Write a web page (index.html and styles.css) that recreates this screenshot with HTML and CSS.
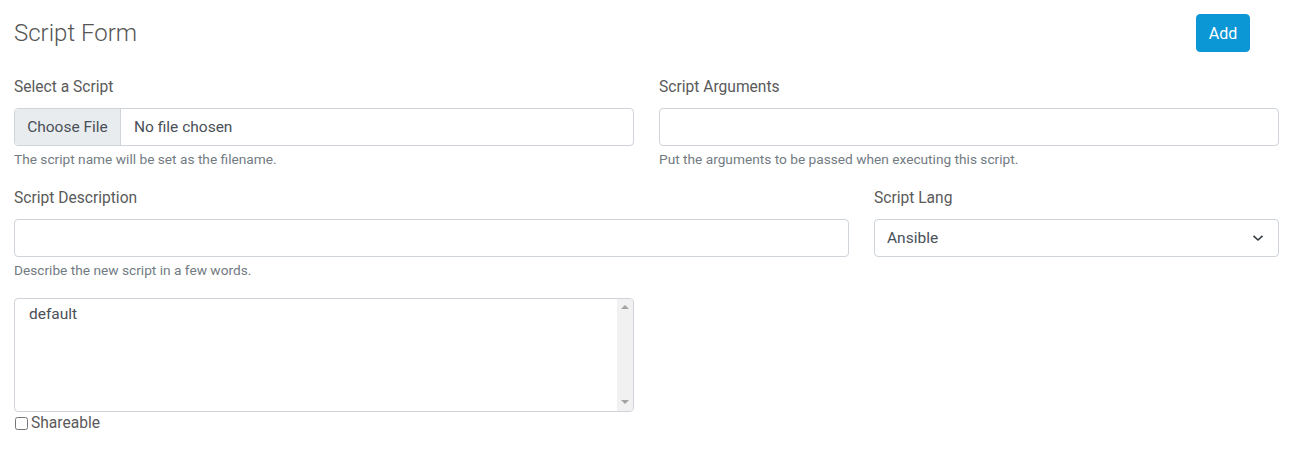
FILE: index.html
```html
<!DOCTYPE html>
<html>
<head>
<meta charset="utf-8">
<link rel="stylesheet" href="styles.css">
</head>
<body>
<div class="page">
  <header class="head">
    <h1 class="title">Script Form</h1>
    <button class="btn-add" type="button">Add</button>
  </header>

  <div class="row">
    <div class="group col-6">
      <label class="lbl">Select a Script</label>
      <div class="file">
        <span class="file-btn">Choose File</span>
        <span class="file-name">No file chosen</span>
      </div>
      <small class="help">The script name will be set as the filename.</small>
    </div>
    <div class="group col-6">
      <label class="lbl">Script Arguments</label>
      <input class="ctl" type="text">
      <small class="help">Put the arguments to be passed when executing this script.</small>
    </div>
  </div>

  <div class="row">
    <div class="group col-8">
      <label class="lbl">Script Description</label>
      <input class="ctl" type="text">
      <small class="help">Describe the new script in a few words.</small>
    </div>
    <div class="group col-4">
      <label class="lbl">Script Lang</label>
      <div class="sel-wrap">
        <select class="ctl sel"><option>Ansible</option></select>
        <svg class="chev" width="12" height="8" viewBox="0 0 12 8"><path d="M1.5 1.8 L6 6 L10.5 1.8" fill="none" stroke="#343a40" stroke-width="1.6"/></svg>
      </div>
    </div>
  </div>

  <div class="row">
    <div class="col-6">
      <div class="ta-wrap">
        <textarea class="code">default</textarea>
        <div class="vscroll"><span class="arr up"></span><span class="arr down"></span></div>
      </div>
      <label class="check"><input type="checkbox" class="cb">Shareable</label>
    </div>
  </div>
</div>
</body>
</html>
```

FILE: styles.css
```css
* { box-sizing: border-box; }
html, body { margin: 0; padding: 0; background: #fff; }
body { font-family: Roboto, "Noto Sans", sans-serif; color: #555; }
.page { padding: 14px 16px 0 14px; }
.head { display: flex; align-items: center; justify-content: space-between; height: 38px; margin-bottom: 23px; padding-right: 29px; }
.title { margin: 0; font-size: 24px; font-weight: 300; color: #555; line-height: 38px; }
.btn-add { background: #0b96d6; color: #fff; border: 1px solid #0b96d6; border-radius: 4px; font-family: Roboto, sans-serif; font-size: 16px; height: 38px; width: 54px; padding: 0; }
.row { display: grid; grid-template-columns: repeat(12, 1fr); column-gap: 25px; }
.col-6 { grid-column: span 6; }
.col-8 { grid-column: span 8; }
.col-4 { grid-column: span 4; }
.group { display: flex; flex-direction: column; margin-bottom: 17px; }
.lbl { font-size: 15.6px; line-height: 24px; margin-bottom: 9px; color: #5a5a5a; }
.ctl { height: 38px; border: 1px solid #ced4da; border-radius: 4px; font-family: Roboto, sans-serif; font-size: 15.5px; color: #495057; padding: 0 12px; background: #fff; width: 100%; }
.file { display: flex; height: 38px; border: 1px solid #ced4da; border-radius: 4px; overflow: hidden; font-size: 15.5px; color: #495057; }
.file-btn { background: #e9ecef; border-right: 1px solid #ced4da; width: 106px; display: flex; align-items: center; justify-content: center; }
.file-name { display: flex; align-items: center; padding-left: 13px; }
.help { font-size: 13.7px; line-height: 19px; margin-top: 4px; color: #727b82; }
.sel-wrap { position: relative; }
.sel { appearance: none; -webkit-appearance: none; display: block; }
.chev { position: absolute; right: 15px; top: 15px; }
.ta-wrap { position: relative; margin-top: 1px; }
.code { display: block; width: 100%; height: 114px; border: 1px solid #ced4da; border-radius: 4px; font-family: Roboto, sans-serif; font-size: 15.5px; color: #495057; padding: 6px 34px 6px 14px; resize: none; overflow: hidden; }
.vscroll { position: absolute; top: 1px; bottom: 1px; right: 1px; width: 16px; background: #f1f1f1; border-radius: 0 3px 3px 0; }
.arr { position: absolute; left: 4px; width: 0; height: 0; border-left: 4px solid transparent; border-right: 4px solid transparent; }
.arr.up { top: 6px; border-bottom: 4px solid #a3a3a3; }
.arr.down { bottom: 7px; border-top: 4px solid #a3a3a3; }
.check { display: flex; align-items: center; font-size: 15.6px; line-height: 22px; color: #5a5a5a; }
.cb { margin: 0 3px 0 1px; width: 13px; height: 13px; }
```
